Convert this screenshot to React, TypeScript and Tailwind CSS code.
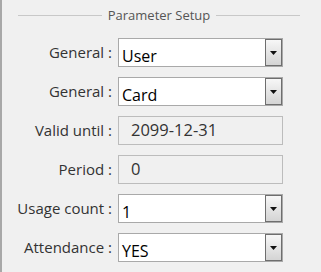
const font = { fontFamily: '"Open Sans", "Noto Sans", sans-serif' };

const Combo = ({ value }: { value: string }) => (
  <div className="relative flex h-[29px] w-[165px] border border-[#a9a9a9] bg-white">
    <span className="pl-[3px] pt-[8px] text-[16px] leading-[18px] text-black">{value}</span>
    <div className="absolute right-[0px] top-[0px] flex h-[27px] w-[17px] items-center justify-center border border-[#6e6e6e] bg-gradient-to-b from-[#f7f7f7] to-[#d4d4d4]">
      <svg width="7" height="4" viewBox="0 0 7 4">
        <path d="M0 0H7L3.5 4Z" fill="#111" />
      </svg>
    </div>
  </div>
);

const ReadOnly = ({ value }: { value: string }) => (
  <div className="flex h-[29px] w-[165px] items-center border border-[#bcbcbc] bg-[#f0f0f0] pl-[12px] text-[16.5px] text-[#333]">
    {value}
  </div>
);

const Row = ({ label, children }: { label: string; children: React.ReactNode }) => (
  <div className="flex items-center">
    <div className="w-[110px] text-right text-[15px] text-[#333]">{label}</div>
    <div className="ml-[6px]">{children}</div>
  </div>
);

export default function App() {
  return (
    <div className="h-[272px] w-[321px] overflow-hidden border-l-2 border-l-[#a8a8a8] bg-[#f0f0f0]" style={font}>
      <div className="flex items-center pt-[6px] pl-[16px] pr-[21px]">
        <div className="h-px flex-1 bg-[#c8c8c8]" />
        <span className="px-[6px] text-[13px] leading-[18px] text-[#555]">Parameter Setup</span>
        <div className="h-px flex-1 bg-[#c8c8c8]" />
      </div>
      <div className="mt-[14px] flex flex-col gap-[10px]">
        <Row label="General :"><Combo value="User" /></Row>
        <Row label="General :"><Combo value="Card" /></Row>
        <Row label="Valid until :"><ReadOnly value="2099-12-31" /></Row>
        <Row label="Period :"><ReadOnly value="0" /></Row>
        <Row label="Usage count :"><Combo value="1" /></Row>
        <Row label="Attendance :"><Combo value="YES" /></Row>
      </div>
    </div>
  );
}
